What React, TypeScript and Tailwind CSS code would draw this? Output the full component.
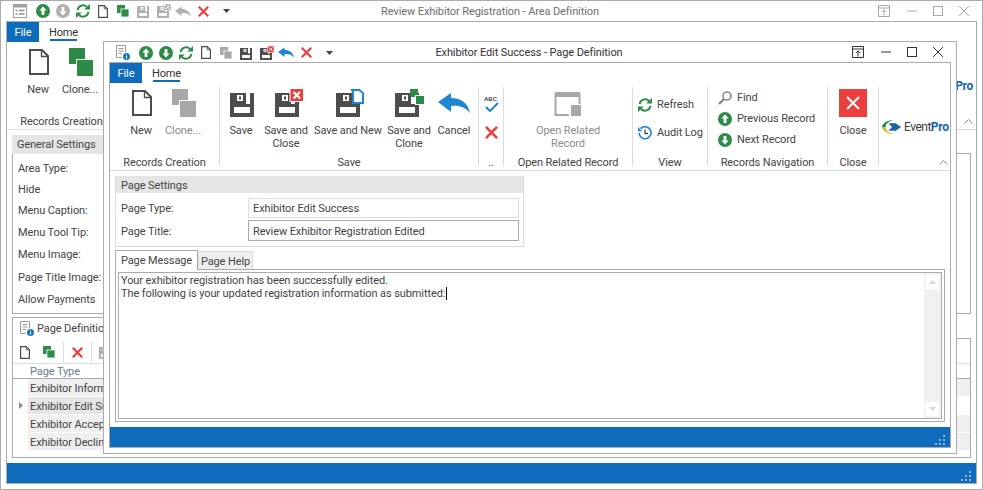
import React from "react";

const G = "#2e8b47";
const DK = "#4d4d4d";
const RED = "#ee3f3f";
const BL = "#1c87d0";

function UpDown({ dir, color = G, size = 14 }: { dir: "up" | "down"; color?: string; size?: number }) {
  return (
    <svg width={size} height={size} viewBox="0 0 14 14" className="shrink-0">
      <circle cx="7" cy="7" r="7" fill={color} />
      {dir === "up" ? <path d="M7 2.6 10.6 6.6H8.4V11H5.6V6.6H3.4Z" fill="#fff" /> : <path d="M7 11.4 3.4 7.4H5.6V3H8.4V7.4H10.6Z" fill="#fff" />}
    </svg>
  );
}
function Refresh({ size = 14 }: { size?: number }) {
  return (
    <svg width={size} height={size} viewBox="0 0 14 14" className="shrink-0" fill="none">
      <path d="M1.6 6.2A5.5 5.5 0 0 1 11 3" stroke={G} strokeWidth="2" />
      <path d="M8.2 5.4H14V0Z" fill={G} />
      <path d="M12.4 7.8A5.5 5.5 0 0 1 3 11" stroke={G} strokeWidth="2" />
      <path d="M5.8 8.6H0V14Z" fill={G} />
    </svg>
  );
}
function Doc({ w = 10, h = 13, sw = 1.2, color = DK }: { w?: number; h?: number; sw?: number; color?: string }) {
  const f = w * 0.38;
  return (
    <svg width={w} height={h} viewBox={`0 0 ${w} ${h}`} className="shrink-0" fill="none">
      <path d={`M${sw / 2} ${sw / 2}H${w - f}L${w - sw / 2} ${f}V${h - sw / 2}H${sw / 2}Z`} stroke={color} strokeWidth={sw} />
      <path d={`M${w - f} ${sw / 2}V${f}H${w - sw / 2}`} stroke={color} strokeWidth={sw * 0.7} />
    </svg>
  );
}
function Clone({ size = 12, color = G }: { size?: number; color?: string }) {
  const s = size * 0.67;
  return (
    <svg width={size} height={size} viewBox={`0 0 ${size} ${size}`} className="shrink-0">
      <rect x="0" y="0" width={s} height={s} fill={color} />
      <rect x={size - s} y={size - s} width={s} height={s} fill={color} stroke="#fff" strokeWidth="0.8" />
    </svg>
  );
}
function SaveBody({ color = DK }: { color?: string }) {
  return (
    <path
      fillRule="evenodd"
      d="M0 0H24V24H0ZM16 0V11H20V0ZM4 14V20H20V14ZM7 2V8H13V2ZM9 3.5H11V6.5H9Z"
      fill={color}
    />
  );
}
function SaveSmall({ color = "#b0b0b0", x = false, xColor = "#b0b0b0" }: { color?: string; x?: boolean; xColor?: string }) {
  return (
    <svg width={x ? 14 : 12} height="14" viewBox={x ? "0 0 28 28" : "0 0 24 28"} className="shrink-0">
      <g transform="translate(0 4)">
        <SaveBody color={color} />
      </g>
      {x && (
        <>
          <rect x="15" y="0" width="13" height="13" fill={xColor} stroke="#fff" />
          <path d="M18 3 25 10M25 3 18 10" stroke="#fff" strokeWidth="2" />
        </>
      )}
    </svg>
  );
}
function Undo({ color = BL, w = 16, h = 11 }: { color?: string; w?: number; h?: number }) {
  return (
    <svg width={w} height={h} viewBox="0 0 32 20" className="shrink-0">
      <path d="M0 9 13 0V5C23 5 30 10 32 20C27 14 21 12 13 13V19Z" fill={color} />
    </svg>
  );
}
function XIcon({ size = 11, color = RED, sw = 2.2 }: { size?: number; color?: string; sw?: number }) {
  return (
    <svg width={size} height={size} viewBox="0 0 11 11" className="shrink-0">
      <path d="M.8.8 10.2 10.2M10.2.8 .8 10.2" stroke={color} strokeWidth={sw} />
    </svg>
  );
}
function Caret() {
  return <svg width="7" height="4" viewBox="0 0 7 4" className="shrink-0"><path d="M0 0H7L3.5 4Z" fill="#444" /></svg>;
}
function DocInfo({ color = "#9a9a9a" }: { color?: string }) {
  return (
    <svg width="14" height="15" viewBox="0 0 14 15" className="shrink-0" fill="none">
      <path d="M.5.5H9.5V7M.5.5V12.5H6" stroke={color} />
      <path d="M2.5 3.5H7.5M2.5 6H7.5M2.5 8.5H6" stroke={color} />
      <circle cx="10.5" cy="11.5" r="3.5" fill="#1b75bc" />
      <path d="M10.5 9.5V10.4M10.5 11V13.6" stroke="#fff" />
    </svg>
  );
}
function FormIcon() {
  return (
    <svg width="14" height="14" viewBox="0 0 14 14" className="shrink-0" fill="none">
      <rect x=".5" y=".5" width="13" height="13" stroke="#a0a0a0" />
      <rect x="1" y="1" width="12" height="2.5" fill="#a0a0a0" />
      <path d="M2.5 6.5H4.5M6 6.5H11.5M2.5 10H4.5M6 10H11.5" stroke="#8a8a8a" strokeWidth="1.4" />
    </svg>
  );
}

function WinBtns({ color }: { color: string }) {
  return (
    <div className="flex items-center gap-[14px]">
      <svg width="12" height="12" viewBox="0 0 12 12" fill="none" className="mr-[1px]">
        <path d="M.5 .5H11.5V11.5H.5ZM.5 3H11.5M6 10.5V5M3.8 7 6 4.8 8.2 7" stroke={color} />
      </svg>
      <svg width="10" height="10" viewBox="0 0 10 10" className="ml-[2px]"><path d="M0 5H10" stroke={color} /></svg>
      <svg width="10" height="10" viewBox="0 0 10 10" className="ml-[2px]" fill="none"><rect x=".5" y=".5" width="9" height="9" stroke={color} /></svg>
      <svg width="10" height="10" viewBox="0 0 10 10" className="ml-[2px]"><path d="M0 0 10 10M10 0 0 10" stroke={color} /></svg>
    </div>
  );
}

function Tabs() {
  return (
    <div className="flex h-[21px] shrink-0 items-start">
      <div className="flex h-[20px] w-[32px] items-center justify-center bg-[#0f6cbd] pt-[2px] text-white">File</div>
      <div className="relative ml-[11px] flex h-[20px] w-[27px] items-center justify-center pt-[1px] text-[#333]">
        Home
        <div className="absolute bottom-[1px] left-0 h-[2px] w-full bg-[#0f6cbd]" />
      </div>
    </div>
  );
}

function Logo() {
  return (
    <div className="flex items-center">
      <svg width="20" height="16" viewBox="0 0 22 16" className="shrink-0">
        <path d="M0 8C1 3 7 0 13 .5 8 1 4 4 4 8Z" fill="#1f8a4c" />
        <path d="M0 8C1 13 7 16 14 15.5 8 15 4 12 4 8Z" fill="#e0b81f" />
        <path d="M7 4H15L21 8 15 12H7L11 8Z" fill="#1565a8" />
      </svg>
      <span className="ml-[2px] text-[12px] leading-[14px] tracking-[-0.5px] text-[#3a3a3a]">Event</span>
      <span className="text-[12px] font-bold leading-[14px] tracking-[-0.3px] text-[#1565a8]">Pro</span>
    </div>
  );
}

function Big({ w, icon, label, dim }: { w: string; icon: React.ReactNode; label: React.ReactNode; dim?: boolean }) {
  return (
    <div className={`flex shrink-0 flex-col items-center ${w}`}>
      <div className="h-[32px] w-[32px]">{icon}</div>
      <div className={`mt-[3px] whitespace-nowrap text-center leading-[13px] ${dim ? "text-[#8c8c8c]" : ""}`}>{label}</div>
    </div>
  );
}
function Group({ w, caption, children, sep = true, pl = "" }: { w: string; caption: string; children: React.ReactNode; sep?: boolean; pl?: string }) {
  return (
    <div className={`mb-[4px] flex h-[79px] shrink-0 flex-col ${w} ${sep ? "border-r border-[#dcdcdc]" : ""}`}>
      <div className={`flex h-[67px] shrink-0 pt-[2px] ${pl}`}>{children}</div>
      <div className="h-[16px] shrink-0 whitespace-nowrap text-center leading-[18px]">{caption}</div>
    </div>
  );
}

function LargeNew() {
  return (
    <svg width="32" height="32" viewBox="0 0 32 32" fill="none">
      <path d="M8 2H20L26 8V26H8Z" stroke={DK} strokeWidth="2" />
      <path d="M19.5 2V8.5H26" stroke={DK} strokeWidth="1.4" />
    </svg>
  );
}
function LargeClone({ color }: { color: string }) {
  return (
    <svg width="32" height="32" viewBox="0 0 32 32">
      <rect x="5" y="0" width="16" height="16" fill={color} />
      <rect x="12.5" y="11.5" width="17" height="17" fill={color} stroke="#fff" />
    </svg>
  );
}
function LargeSave({ dx, children }: { dx: number; children?: React.ReactNode }) {
  return (
    <svg width="32" height="32" viewBox="0 0 32 32" className="overflow-visible">
      <g transform={`translate(${dx} 4)`}>
        <SaveBody />
      </g>
      {children}
    </svg>
  );
}

function Grip() {
  return (
    <div className="grid grid-cols-3 gap-[2px]">
      {[0, 0, 1, 0, 1, 1, 1, 1, 1].map((v, i) => (
        <div key={i} className={`h-[2px] w-[2px] ${v ? "bg-[#8fb6dc]" : ""}`} />
      ))}
    </div>
  );
}
function StatusBar() {
  return (
    <div className="flex h-[20px] shrink-0 items-end justify-end bg-[#0f6cbd] pb-[2px] pr-[5px]">
      <Grip />
    </div>
  );
}
function Chevron({ className }: { className: string }) {
  return (
    <svg width="9" height="5" viewBox="0 0 9 5" fill="none" className={className}>
      <path d="M.5 4.5 4.5 .5 8.5 4.5" stroke="#8a8a8a" />
    </svg>
  );
}

const labels: [string, string][] = [
  ["Area Type:", "h-[21px]"],
  ["Hide", "h-[21px]"],
  ["Menu Caption:", "h-[22px]"],
  ["Menu Tool Tip:", "h-[22px]"],
  ["Menu Image:", "h-[22px]"],
  ["Page Title Image:", "h-[23px]"],
  ["Allow Payments", "h-[22px]"],
];
const rows = ["Exhibitor Information", "Exhibitor Edit Success", "Exhibitor Accepted", "Exhibitor Declined"];

function OuterWindow() {
  return (
    <div className="flex h-[490px] w-[983px] flex-col border border-[#ababab] px-[5px] pb-[5px]">
      <div className="relative flex h-[20px] shrink-0 items-center justify-center pr-[3px] pt-[2px] text-[#6e6e6e]">
        <div className="absolute left-[7px] top-[3px] flex items-center">
          <FormIcon />
          <div className="ml-[9px]"><UpDown dir="up" /></div>
          <div className="ml-[6px]"><UpDown dir="down" color="#b0b0b0" /></div>
          <div className="ml-[6px]"><Refresh /></div>
          <div className="ml-[8px]"><Doc /></div>
          <div className="ml-[9px]"><Clone /></div>
          <div className="ml-[8px]"><SaveSmall /></div>
          <div className="ml-[8px]"><SaveSmall x /></div>
          <div className="ml-[4px]"><Undo color="#b0b0b0" /></div>
          <div className="ml-[7px]"><XIcon /></div>
          <div className="ml-[14px]"><Caret /></div>
        </div>
        <span>Review Exhibitor Registration - Area Definition</span>
        <div className="absolute right-[8px] top-[4px]"><WinBtns color="#a8a8a8" /></div>
      </div>
      <div className="flex min-h-0 flex-1 flex-col border border-[#ababab]">
        <Tabs />
        <div className="relative flex h-[87px] shrink-0 border-b border-[#dcdcdc] pt-[3px]">
          <Group w="w-[109px]" caption="Records Creation" sep={false} pl="pl-[10px]">
            <Big w="w-[42px]" icon={<LargeNew />} label="New" />
            <Big w="w-[42px]" icon={<LargeClone color={G} />} label="Clone..." />
          </Group>
          <div className="flex-1" />
          <div className="flex h-[80px] items-center pr-[3px]"><Logo /></div>
          <Chevron className="absolute bottom-[5px] right-[3px]" />
        </div>
        <div className="flex min-h-0 flex-1 flex-col gap-[3px] p-[5px]">
          <div className="flex h-[179px] shrink-0 flex-col">
            <div className="flex h-[19px] shrink-0">
              <div className="flex w-[500px] items-center bg-[#e5e5e5] pl-[5px]">General Settings</div>
              <div className="mt-[18px] flex-1 border-r border-t border-[#ababab]" />
            </div>
            <div className="flex-1 border-x border-b border-[#ababab] pl-[5px] pt-[4px]">
              {labels.map(([t, h]) => (
                <div key={t} className={`flex items-center ${h}`}>{t}</div>
              ))}
            </div>
          </div>
          <div className="flex min-h-0 flex-1 flex-col">
            <div className="flex h-[22px] shrink-0">
              <div className="flex w-[500px] items-center border-l border-t border-[#ababab] pl-[7px]">
                <DocInfo />
                <span className="ml-[3px]">Page Definition</span>
              </div>
              <div className="mt-[21px] flex-1 border-r border-t border-[#ababab]" />
            </div>
            <div className="flex min-h-0 flex-1 flex-col border-x border-b border-[#ababab]">
              <div className="flex h-[25px] shrink-0 items-center border-b border-[#dcdcdc] pl-[7px] pt-[2px]">
                <Doc />
                <div className="ml-[13px]"><Clone /></div>
                <div className="ml-[8px] h-[20px] w-px bg-[#dcdcdc]" />
                <div className="ml-[8px]"><XIcon /></div>
                <div className="ml-[8px] h-[20px] w-px bg-[#dcdcdc]" />
                <div className="ml-[7px]"><SaveSmall /></div>
              </div>
              <div className="flex h-[15px] shrink-0 items-center border-b border-[#a9a9a9] pl-[17px] pt-[2px] text-[#6b7a8a]">Page Type</div>
              <div className="ml-[15px] flex flex-col">
                {rows.map((r, i) => (
                  <div key={r} className={`relative flex h-[18px] items-center border-b border-white ${i === 1 ? "" : "bg-[#efefef]"}`}>
                    <div className={`flex h-full w-[400px] items-center pl-[2px] pt-[2px] ${i === 1 ? "bg-[#e5e5e5]" : ""}`}>{r}</div>
                    {i === 1 && (
                      <svg width="4" height="7" viewBox="0 0 4 7" className="absolute -left-[9px] top-[5px]"><path d="M0 0 4 3.5 0 7Z" fill="#8a8a8a" /></svg>
                    )}
                  </div>
                ))}
              </div>
            </div>
          </div>
        </div>
        <StatusBar />
      </div>
    </div>
  );
}

function InnerWindow() {
  return (
    <div className="absolute left-[103px] top-[41px] z-10 flex h-[413px] w-[854px] flex-col border border-[#ababab] bg-white px-[5px] pb-[5px]">
      <div className="relative flex h-[20px] shrink-0 items-center justify-center pr-[2px] pt-[2px] text-[#333]">
        <div className="absolute left-[7px] top-[3px] flex items-center">
          <DocInfo />
          <div className="ml-[9px]"><UpDown dir="up" /></div>
          <div className="ml-[6px]"><UpDown dir="down" /></div>
          <div className="ml-[6px]"><Refresh /></div>
          <div className="ml-[8px]"><Doc /></div>
          <div className="ml-[9px]"><Clone color="#a8a8a8" /></div>
          <div className="ml-[8px]"><SaveSmall color={DK} /></div>
          <div className="ml-[8px]"><SaveSmall color={DK} x xColor={RED} /></div>
          <div className="ml-[4px]"><Undo /></div>
          <div className="ml-[7px]"><XIcon /></div>
          <div className="ml-[14px]"><Caret /></div>
        </div>
        <span>Exhibitor Edit Success - Page Definition</span>
        <div className="absolute right-[8px] top-[4px]"><WinBtns color="#333" /></div>
      </div>
      <div className="flex min-h-0 flex-1 flex-col border border-[#ababab]">
        <Tabs />
        <div className="relative flex h-[87px] shrink-0 border-b border-[#dcdcdc] pt-[3px]">
          <Group w="w-[110px]" caption="Records Creation" pl="pl-[10px]">
            <Big w="w-[42px]" icon={<LargeNew />} label="New" />
            <Big w="w-[42px]" icon={<LargeClone color="#a8a8a8" />} label="Clone..." dim />
          </Group>
          <Group w="w-[259px]" caption="Save">
            <Big w="w-[42px]" icon={<LargeSave dx={5} />} label="Save" />
            <Big
              w="w-[48px]"
              icon={
                <LargeSave dx={5}>
                  <rect x="20" y="-.5" width="13.5" height="13" fill={RED} stroke="#fff" />
                  <path d="M23.5 3 30 9.5M30 3 23.5 9.5" stroke="#fff" strokeWidth="2.2" />
                </LargeSave>
              }
              label={<>Save and<br />Close</>}
            />
            <Big
              w="w-[76px]"
              icon={
                <LargeSave dx={4}>
                  <path d="M20 1H28 M20 1H27L31 4V14H21V3Z" fill="#fff" stroke={BL} strokeWidth="2" />
                </LargeSave>
              }
              label="Save and New"
            />
            <Big
              w="w-[46px]"
              icon={
                <LargeSave dx={2}>
                  <rect x="17" y="0" width="8" height="8" fill={G} />
                  <rect x="22.5" y="6.5" width="9" height="9" fill={G} stroke="#fff" />
                </LargeSave>
              }
              label={<>Save and<br />Clone</>}
            />
            <Big
              w="w-[44px]"
              icon={
                <svg width="32" height="32" viewBox="0 0 32 32">
                  <g transform="translate(0 4)"><path d="M0 9 13 0V5C23 5 30 10 32 20C27 14 21 12 13 13V19Z" fill={BL} /></g>
                </svg>
              }
              label="Cancel"
            />
          </Group>
          <Group w="w-[25px]" caption="..">
            <div className="flex w-full flex-col items-center pt-[8px]">
              <div className="relative h-[15px] w-[16px]">
                <span className="absolute left-[1px] -top-[1px] font-['Liberation_Sans',sans-serif] text-[6px] font-bold leading-[7px] tracking-normal text-[#444]">ABC</span>
                <svg width="14" height="10" viewBox="0 0 14 10" className="absolute bottom-0 right-0"><path d="M1 5 5 9 13 1" fill="none" stroke={BL} strokeWidth="2" /></svg>
              </div>
              <div className="mt-[14px]"><XIcon size={13} /></div>
            </div>
          </Group>
          <Group w="w-[129px]" caption="Open Related Record">
            <Big
              w="w-full"
              dim
              icon={
                <svg width="32" height="32" viewBox="0 0 32 32" fill="none">
                  <path d="M3.5 4.5H27.5V15M3.5 4.5V26H17" stroke="#a8a8a8" strokeWidth="2" />
                  <rect x="3" y="3" width="25" height="5" fill="#a8a8a8" />
                  <rect x="18.5" y="15.5" width="11" height="12" fill="#a8a8a8" stroke="#fff" />
                </svg>
              }
              label={<>Open Related<br />Record</>}
            />
          </Group>
          <Group w="w-[75px]" caption="View">
            <div className="flex flex-col pl-[5px] pt-[8px]">
              <div className="flex h-[16px] items-center gap-[5px]"><Refresh /><span>Refresh</span></div>
              <div className="mt-[12px] flex h-[16px] items-center gap-[5px]">
                <svg width="14" height="14" viewBox="0 0 14 14" fill="none">
                  <path d="M2.6 2.6A6 6 0 1 1 1 7" stroke={BL} strokeWidth="1.6" />
                  <path d="M0 1V5.2H4.2Z" fill={BL} />
                  <path d="M7 3.5V7.5H10" stroke={DK} strokeWidth="1.3" />
                </svg>
                <span>Audit Log</span>
              </div>
            </div>
          </Group>
          <Group w="w-[120px]" caption="Records Navigation">
            <div className="-mt-[2px] flex flex-col pl-[10px]">
              <div className="flex h-[21px] items-center gap-[5px]">
                <svg width="14" height="14" viewBox="0 0 14 14" fill="none">
                  <circle cx="9" cy="5" r="4" stroke="#8a8a8a" strokeWidth="1.6" />
                  <path d="M6 8 1 13" stroke="#8a8a8a" strokeWidth="2.4" />
                </svg>
                <span>Find</span>
              </div>
              <div className="flex h-[21px] items-center gap-[5px]"><UpDown dir="up" /><span>Previous Record</span></div>
              <div className="flex h-[21px] items-center gap-[5px]"><UpDown dir="down" /><span>Next Record</span></div>
            </div>
          </Group>
          <Group w="w-[51px]" caption="Close">
            <Big
              w="w-full"
              icon={
                <div className="ml-[2px] flex h-[28px] w-[28px] items-center justify-center bg-[#ee3f3f]">
                  <XIcon size={14} color="#fff" sw={1.6} />
                </div>
              }
              label="Close"
            />
          </Group>
          <div className="flex h-[80px] flex-1 items-center pl-[3px]"><Logo /></div>
          <Chevron className="absolute bottom-[5px] right-[2px]" />
        </div>
        <div className="flex min-h-0 flex-1 flex-col p-[5px]">
          <div className="flex h-[71px] w-[409px] shrink-0 flex-col border-x border-b border-[#dcdcdc]">
            <div className="flex h-[17px] shrink-0 items-center bg-[#e5e5e5] pl-[5px] pt-[2px]">Page Settings</div>
            <div className="mt-[5px] flex h-[20px] items-center pl-[5px] pt-[2px]">
              <span className="w-[127px]">Page Type:</span>
              <div className="-mt-[2px] flex h-[20px] w-[271px] items-center border border-[#dcdcdc] pl-[4px] pt-[2px]">Exhibitor Edit Success</div>
            </div>
            <div className="mt-[2px] flex h-[21px] items-center pl-[5px] pt-[2px]">
              <span className="w-[127px]">Page Title:</span>
              <div className="-mt-[2px] flex h-[21px] w-[271px] items-center border border-[#ababab] pl-[4px] pt-[2px]">Review Exhibitor Registration Edited</div>
            </div>
          </div>
          <div className="relative z-10 mt-[3px] flex h-[20px] shrink-0 items-end">
            <div className="flex h-[20px] w-[83px] items-center justify-center border border-b-0 border-[#ababab] bg-white">Page Message</div>
            <div className="mb-px flex h-[18px] w-[55px] items-center justify-center border border-b-0 border-[#dcdcdc] bg-[#f0f0f0] pt-[2px]">Page Help</div>
          </div>
          <div className="-mt-px flex min-h-0 flex-1 border border-[#ababab] p-[2px]">
            <div className="flex min-h-0 flex-1 border border-[#ababab]">
              <div className="flex-1 pl-[2px] pt-[1px] leading-[13px]">
                <div>Your exhibitor registration has been successfully edited.</div>
                <div className="flex items-center">The following is your updated registration information as submitted:<span className="ml-px inline-block h-[13px] w-px bg-black" /></div>
              </div>
              <div className="flex w-[17px] shrink-0 flex-col justify-between bg-[#f0f0f0] p-[1px]">
                <div className="flex h-[16px] items-center justify-center border border-[#f5f5f5] bg-white">
                  <svg width="7" height="4" viewBox="0 0 7 4"><path d="M3.5 0 7 4H0Z" fill="#cfdcdc" /></svg>
                </div>
                <div className="flex h-[16px] items-center justify-center border border-[#f5f5f5] bg-white">
                  <svg width="7" height="4" viewBox="0 0 7 4"><path d="M0 0H7L3.5 4Z" fill="#cfdcdc" /></svg>
                </div>
              </div>
            </div>
          </div>
        </div>
        <StatusBar />
      </div>
    </div>
  );
}

export default function App() {
  return (
    <div className="relative h-[490px] w-[983px] overflow-hidden whitespace-nowrap bg-white font-['Roboto',sans-serif] text-[11px] leading-[14px] tracking-[-0.1px] text-[#444]">
      <OuterWindow />
      <InnerWindow />
    </div>
  );
}
